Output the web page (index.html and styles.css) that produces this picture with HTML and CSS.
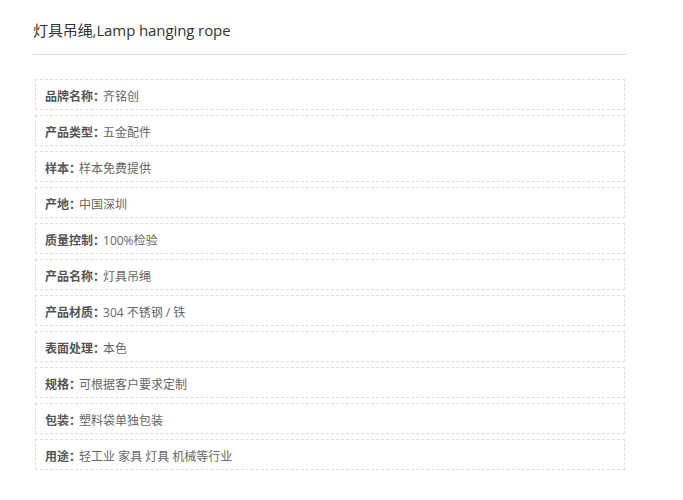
FILE: index.html
```html
<!DOCTYPE html>
<html>
<head>
  <meta charset="utf-8">
  <meta name="viewport" content="width=device-width, initial-scale=1">
  <link rel="stylesheet" href="styles.css">
</head>
<body>
  <div class="detail">
    <h2 class="title">灯具吊绳,Lamp hanging rope</h2>

    <ul class="attrs">
      <li><b>品牌名称：</b>齐铭创</li>
      <li><b>产品类型：</b>五金配件</li>
      <li><b>样本：</b>样本免费提供</li>
      <li><b>产地：</b>中国深圳</li>
      <li><b>质量控制：</b>100%检验</li>
      <li><b>产品名称：</b>灯具吊绳</li>
      <li><b>产品材质：</b>304 不锈钢 / 铁</li>
      <li><b>表面处理：</b>本色</li>
      <li><b>规格：</b>可根据客户要求定制</li>
      <li><b>包装：</b>塑料袋单独包装</li>
      <li><b>用途：</b>轻工业 家具 灯具 机械等行业</li>
    </ul>
  </div>
</body>
</html>
```

FILE: styles.css
```css
body {
  margin: 0;
  font-family: "Open Sans", "Noto Sans CJK SC", sans-serif;
  background: #fff;
}

.detail {
  width: 594px;
  padding: 0 0 0 33px;
}

.title {
  margin: 0;
  padding: 20px 0 14px;
  font-size: 15px;
  font-weight: normal;
  line-height: 20px;
  letter-spacing: -0.1px;
  color: #333;
  border-bottom: 1px solid #ddd;
}

.attrs {
  list-style: none;
  margin: 24px 0 0 2px;
  padding: 0;
  width: 590px;
  display: flex;
  flex-direction: column;
  gap: 5px;
}

.attrs li {
  box-sizing: border-box;
  height: 31px;
  padding: 7px 9px 0;
  border: 1px dashed #ddd;
  font-size: 12px;
  line-height: 20px;
  color: #666;
}

.attrs b {
  color: #555;
  margin-right: -2px;
}
```
